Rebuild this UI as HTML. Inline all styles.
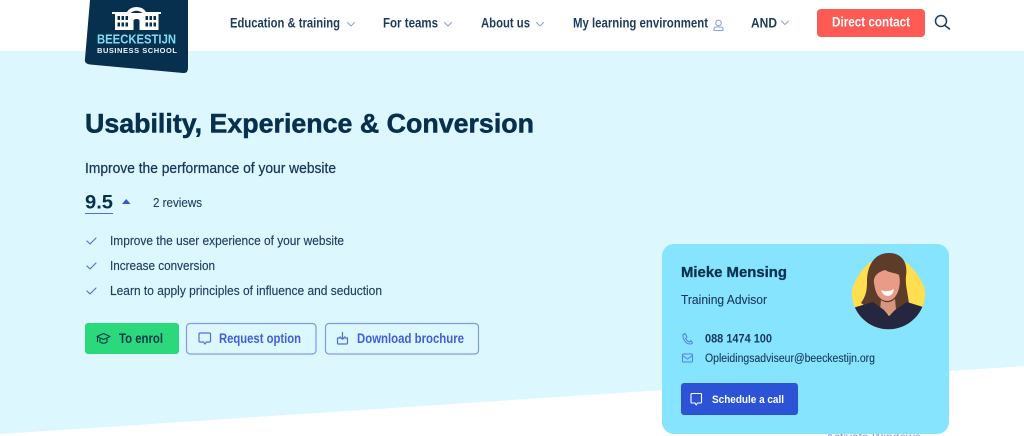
<!DOCTYPE html>
<html><head><meta charset="utf-8"><style>
html,body{margin:0;padding:0;width:1024px;height:436px;overflow:hidden;background:#fff}
svg{display:block}
text{font-family:"Liberation Sans",sans-serif;fill:#17375a}
.n{font-size:13.500px;font-weight:700;fill:#1c3c5e}
.l{font-size:13px;fill:#1f3f60;stroke:#1f3f60;stroke-width:.15}
.b{font-size:13.500px;font-weight:700;fill:#3f5fd6}
.i{fill:none;stroke:#4f70e0;stroke-width:1.200;stroke-linecap:round;stroke-linejoin:round}
.ch{fill:none;stroke:#8ea2ea;stroke-width:1.100;stroke-linecap:round;stroke-linejoin:round}
</style></head><body>
<svg width="1024" height="436" viewBox="0 0 1024 436" xmlns="http://www.w3.org/2000/svg">
<defs><clipPath id="av"><circle cx="888.5" cy="292.5" r="36.8"/></clipPath></defs>
<polygon points="0,51 1024,51 1024,366 0,434" fill="#ddf7ff"/>

<!-- logo -->
<path d="M90,0H188V68Q188,73.500 183,73L90,64.500Q84,63.500 85,59Z" fill="#07304f"/>
<path d="M112,12H127Q130,7 136.500,7Q143,7 146,12H161V14H158.500V30H115V14H112Z" fill="#fff"/>
<g fill="#07304f">
<rect x="117.500" y="16" width="2.500" height="4"/><rect x="121.500" y="16" width="2.500" height="4"/><rect x="125.500" y="16" width="2.500" height="4"/>
<rect x="117.500" y="22.500" width="2.500" height="4"/><rect x="121.500" y="22.500" width="2.500" height="4"/><rect x="125.500" y="22.500" width="2.500" height="4"/>
<rect x="145.500" y="16" width="2.500" height="4"/><rect x="149.500" y="16" width="2.500" height="4"/><rect x="153.500" y="16" width="2.500" height="4"/>
<rect x="145.500" y="22.500" width="2.500" height="4"/><rect x="149.500" y="22.500" width="2.500" height="4"/><rect x="153.500" y="22.500" width="2.500" height="4"/>
<path d="M133.500,30V21Q133.500,19 136.500,19Q139.500,19 139.500,21V30Z"/>
<path d="M130.500,13Q136.500,8.500 142.500,13Z"/>
</g>
<text x="97" y="43.700" font-size="13" font-weight="700" style="fill:#7fdcf5" textLength="79" lengthAdjust="spacingAndGlyphs">BEECKESTIJN</text>
<text x="97" y="53.200" font-size="7.500" font-weight="700" style="fill:#e8f4f8" textLength="80" lengthAdjust="spacing">BUSINESS SCHOOL</text>

<!-- nav -->
<text class="n" x="230" y="27.500" textLength="110" lengthAdjust="spacingAndGlyphs">Education &amp; training</text>
<path class="ch" d="M347.500,22.500L351,26L354.500,22.500"/>
<text class="n" x="383" y="27.500" textLength="55" lengthAdjust="spacingAndGlyphs">For teams</text>
<path class="ch" d="M444.500,22.500L448,26L451.500,22.500"/>
<text class="n" x="481" y="27.500" textLength="49" lengthAdjust="spacingAndGlyphs">About us</text>
<path class="ch" d="M536.500,22.500L540,26L543.500,22.500"/>
<text class="n" x="573" y="27.500" textLength="135" lengthAdjust="spacingAndGlyphs">My learning environment</text>
<g class="ch"><circle cx="718.500" cy="23" r="2.800"/><path d="M714,30.500V29Q714,27 716.500,27H720.500Q723,27 723,29V30.500Z"/></g>
<text class="n" x="751" y="27.500" textLength="26" lengthAdjust="spacingAndGlyphs">AND</text>
<path class="ch" d="M781.500,21L785,24.500L788.500,21"/>
<rect x="817" y="9" width="108" height="28" rx="4" fill="#ff5a54"/>
<text x="832" y="26.500" font-size="13.500" font-weight="700" style="fill:#fff" textLength="78" lengthAdjust="spacingAndGlyphs">Direct contact</text>
<g fill="none" stroke="#1c3c5e" stroke-width="1.500" stroke-linecap="round"><circle cx="941" cy="21" r="5.500"/><path d="M945,25.500L949.500,29"/></g>

<!-- hero -->
<text x="85" y="132.500" font-size="27" font-weight="700" style="fill:#07304f;stroke:#07304f;stroke-width:.5" textLength="449" lengthAdjust="spacingAndGlyphs">Usability, Experience &amp; Conversion</text>
<text x="85" y="173" font-size="14.500" style="fill:#17375a;stroke:#17375a;stroke-width:.25" textLength="251" lengthAdjust="spacingAndGlyphs">Improve the performance of your website</text>
<text x="85" y="208.500" font-size="19" font-weight="700" style="fill:#07304f" textLength="28" lengthAdjust="spacingAndGlyphs">9.5</text>
<rect x="85" y="213" width="28" height="1" fill="#4f6fe0"/>
<polygon points="122,204 130.500,204 126.200,199" fill="#3556d4"/>
<text x="153" y="207" font-size="12.500" style="fill:#1f3f60;stroke:#1f3f60;stroke-width:.12" textLength="49" lengthAdjust="spacingAndGlyphs">2 reviews</text>

<path class="i" d="M87,241L90,244L96,238"/>
<text class="l" x="110" y="245" textLength="234" lengthAdjust="spacingAndGlyphs">Improve the user experience of your website</text>
<path class="i" d="M87,266L90,269L96,263"/>
<text class="l" x="110" y="270" textLength="105" lengthAdjust="spacingAndGlyphs">Increase conversion</text>
<path class="i" d="M87,291L90,294L96,288"/>
<text class="l" x="110" y="295" textLength="272" lengthAdjust="spacingAndGlyphs">Learn to apply principles of influence and seduction</text>

<!-- buttons -->
<rect x="85" y="323" width="94" height="31" rx="3" fill="#2bd97c"/>
<g fill="none" stroke="#0d3a48" stroke-width="1.100" stroke-linejoin="round"><path d="M97,336.500L103.500,333.500L110,336.500L103.500,339.500Z"/><path d="M100,338.500V342Q103.500,344.500 107,342V338.500"/><path d="M97.500,337V342"/></g>
<text x="119" y="343" font-size="13.500" font-weight="700" style="fill:#0d3a48" textLength="44" lengthAdjust="spacingAndGlyphs">To enrol</text>

<rect x="186.500" y="323.500" width="129.500" height="30.500" rx="3.500" fill="none" stroke="#7d9bec" stroke-width="1.200"/>
<path class="i" d="M200,333H209.500Q210.500,333 210.500,334V341Q210.500,342 209.500,342H206.500L205,344L203.500,342H200Q199,342 199,341V334Q199,333 200,333Z"/>
<text class="b" x="219" y="343" textLength="82" lengthAdjust="spacingAndGlyphs">Request option</text>

<rect x="325.500" y="323.500" width="153" height="30.500" rx="3.500" fill="none" stroke="#7d9bec" stroke-width="1.200"/>
<path class="i" d="M342.500,332.500V339M340,336.800L342.500,339.300L345,336.800M340,338H337.500V343Q337.500,344 338.500,344H346.500Q347.500,344 347.500,343V338H345"/>
<text class="b" x="357" y="343" textLength="107" lengthAdjust="spacingAndGlyphs">Download brochure</text>

<!-- card -->
<text x="826" y="441" font-size="12" style="fill:#999">Activate Windows</text>
<rect x="662" y="244" width="287" height="190" rx="12" fill="#87e4ff"/>
<text x="681" y="277" font-size="14.500" font-weight="700" style="fill:#07304f;stroke:#07304f;stroke-width:.3" textLength="106" lengthAdjust="spacingAndGlyphs">Mieke Mensing</text>
<text x="681" y="304" font-size="12.500" style="fill:#17375a;stroke:#17375a;stroke-width:.1" textLength="86" lengthAdjust="spacingAndGlyphs">Training Advisor</text>

<!-- avatar -->
<g clip-path="url(#av)"><path d="M851,295C853,282 860,271 870,262H906C916,271 924,282 926,295V331H851Z" fill="#ffdf4f"/></g>
<path d="M861,303C866,296 867,290 867,282C867,266 874,253 889,253C903,253 908,264 906,276C905,285 908,294 909,304C900,312 872,312 861,303Z" fill="#5e3c2a"/>
<path d="M874,283C873,276 878,272 885,270C890,273 896,273 899,275C901,283 899,292 895,297C891,302 884,302 880,298C876,294 875,289 874,283Z" fill="#e89c88"/>
<path d="M881,300Q888,305 895,299L896,310L889,315L880,310Z" fill="#d9967e"/>
<path d="M881,290Q887,293 894,289Q893,296 887.500,296Q883,296 881,290Z" fill="#fff"/>
<g clip-path="url(#av)"><path d="M851,331V309L856,307L873,302L884,310L889,316L895,310L907,302L923,307L926,309V331Z" fill="#24273f"/></g>

<g fill="none" stroke="#4f80e8" stroke-width="1" stroke-linecap="round" stroke-linejoin="round">
<path d="M683,334.500L685,333.500L687,337L685.500,338.500Q687,341 689.500,342L691,340.500L692.500,343L691,344Q687,344.500 684.500,340.500Q682.500,337 683,334.500Z"/>
<rect x="682.500" y="354" width="10" height="8" rx="1"/><path d="M682.500,355.500L687.500,359L692.500,355.500"/>
</g>
<text x="705" y="342.500" font-size="11.500" font-weight="700" style="fill:#17375a" textLength="67" lengthAdjust="spacingAndGlyphs">088 1474 100</text>
<text x="705" y="362" font-size="11.500" style="fill:#17375a;stroke:#17375a;stroke-width:.1" textLength="170" lengthAdjust="spacingAndGlyphs">Opleidingsadviseur@beeckestijn.org</text>

<rect x="681" y="383" width="117" height="32" rx="3" fill="#2c52d6"/>
<path d="M692,393.500H700.500Q701.500,393.500 701.500,394.500V402Q701.500,403 700.500,403H697.500L696.200,405L695,403H692Q691,403 691,402V394.500Q691,393.500 692,393.500Z" fill="none" stroke="#fff" stroke-width="1.100" stroke-linejoin="round"/>
<text x="712" y="403" font-size="11" font-weight="700" style="fill:#fff" textLength="72" lengthAdjust="spacingAndGlyphs">Schedule a call</text>
</svg>
</body></html>
